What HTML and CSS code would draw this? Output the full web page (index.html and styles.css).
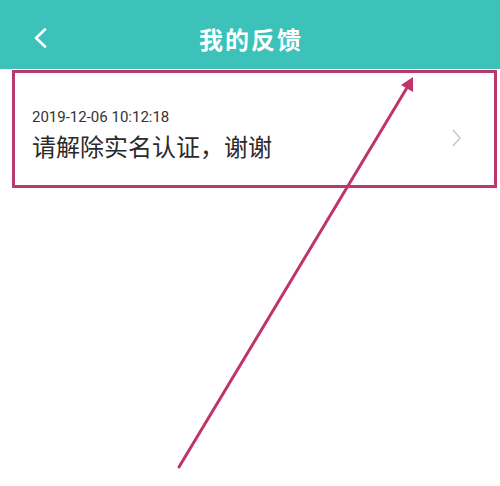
FILE: index.html
```html
<!DOCTYPE html>
<html lang="zh">
<head>
<meta charset="utf-8">
<link rel="stylesheet" href="styles.css">
</head>
<body>
<div class="page">
  <header class="bar">
    <svg class="back" width="14" height="20" viewBox="0 0 14 20"><path d="M12 1.5 L3 10 L12 18.5" fill="none" stroke="#fff" stroke-width="2.6" stroke-linecap="round" stroke-linejoin="round"/></svg>
    <h1 class="title">我的反馈</h1>
  </header>
  <div class="item">
    <div class="texts">
      <div class="date">2019-12-06 10:12:18</div>
      <div class="msg">请解除实名认证，谢谢</div>
    </div>
    <svg class="chev" width="9" height="18" viewBox="0 0 9 18"><path d="M1 1 L8 9 L1 17" fill="none" stroke="#c4c4c4" stroke-width="1.3"/></svg>
  </div>
  <svg class="arrow" width="500" height="486" viewBox="0 0 500 486">
    <line x1="179" y1="467" x2="408" y2="86" stroke="#c0336b" stroke-width="3" stroke-linecap="round"/>
    <polygon points="413,77 413,92 401,85" fill="#c0336b"/>
  </svg>
</div>
</body>
</html>
```
FILE: styles.css
```css
* { box-sizing: border-box; }
html, body { margin: 0; padding: 0; background: #fff; }
.page {
  position: relative;
  width: 500px;
  height: 486px;
  overflow: hidden;
  font-family: "Noto Sans CJK SC", "Noto Sans", sans-serif;
}
.bar {
  height: 69px;
  background: #3cc2b9;
  display: flex;
  align-items: center;
  justify-content: center;
  position: relative;
}
.back {
  position: absolute;
  left: 33px;
  top: 28px;
}
.title {
  margin: 0;
  color: #fff;
  font-size: 24px;
  font-weight: 700;
  line-height: 30px;
  letter-spacing: 2px;
  margin-top: 8px;
  margin-left: 2px;
}
.item {
  margin: 1px 3px 0 12px;
  height: 118px;
  border: 3px solid #b9386d;
  display: flex;
  align-items: flex-start;
  padding: 35px 0 0 17px;
}
.texts { flex: 1; }
.date {
  font-family: Roboto, "Noto Sans", sans-serif;
  font-size: 15px;
  line-height: 18px;
  color: #333;
}
.msg {
  margin-top: 5px;
  font-size: 24px;
  line-height: 30px;
  color: #2a2a2a;
}
.chev {
  margin: 21px 33px 0 0;
}
.arrow {
  position: absolute;
  left: 0;
  top: 0;
  pointer-events: none;
}
```
